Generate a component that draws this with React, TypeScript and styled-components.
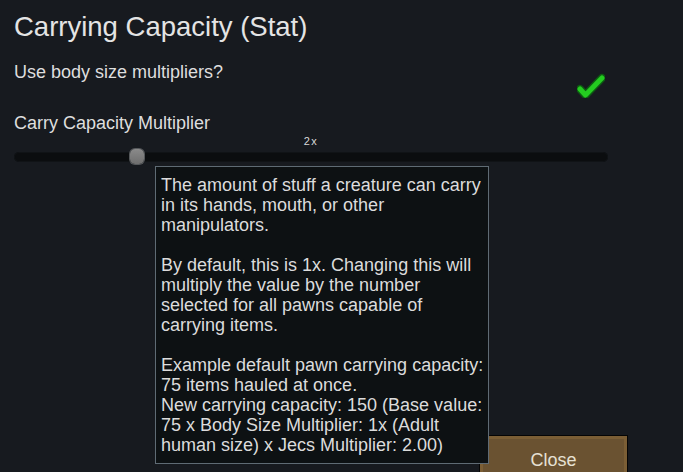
import styled, { createGlobalStyle } from "styled-components";

const GlobalStyle = createGlobalStyle`
  html, body {
    margin: 0;
    padding: 0;
    background: #171a1f;
    overflow: hidden;
  }
  body {
    font-family: "Liberation Sans", Arial, sans-serif;
    color: #dedede;
  }
`;

const Window = styled.div`
  position: relative;
  box-sizing: border-box;
  height: 485px;
  padding: 11px 55px 0 14px;
  display: flex;
  flex-direction: column;
  background: #171a1f;
`;

const Title = styled.h1`
  margin: 0;
  font-size: 27.5px;
  line-height: 32px;
  font-weight: normal;
  color: #e4e4e4;
`;

const Settings = styled.div`
  width: 594px;
  display: flex;
  flex-direction: column;
`;

const CheckRow = styled.div`
  margin-top: 19px;
  height: 36px;
  display: flex;
  justify-content: space-between;
  align-items: flex-start;
`;

const Label = styled.span`
  font-size: 18px;
  line-height: 20px;
  color: #dedede;
`;

const CheckMark = styled.svg`
  margin-top: 11px;
  margin-right: 3px;
  width: 28px;
  height: 25px;
`;

const SliderBlock = styled.div`
  margin-top: 15px;
  display: flex;
  flex-direction: column;
`;

const SliderValue = styled.div`
  margin-top: 2px;
  text-align: center;
  font-size: 11px;
  line-height: 12px;
  letter-spacing: 1.5px;
  color: #d8d8d8;
`;

const Track = styled.div`
  position: relative;
  margin-top: 5px;
  height: 10px;
  border-radius: 5px;
  background: #0b0d0f;
  box-shadow: inset 0 0 0 1px #101316;
`;

const Thumb = styled.div`
  position: absolute;
  top: -3px;
  width: 14px;
  height: 15px;
  border-radius: 5px;
  background: linear-gradient(#8a8a8a, #6e6e6e);
  box-shadow: 0 0 0 1px #55585b;
`;

const Footer = styled.div`
  margin-top: auto;
  display: flex;
  justify-content: flex-end;
`;

const CloseButton = styled.button`
  box-sizing: border-box;
  width: 149px;
  height: 50px;
  padding: 14px 0 0;
  display: flex;
  justify-content: center;
  align-items: flex-start;
  border: 1px solid #050505;
  outline: 3px solid #7b5e35;
  outline-offset: -4px;
  background: #6a5231;
  font-family: inherit;
  font-size: 18px;
  line-height: 20px;
  color: #e6e1d4;
`;

const Tooltip = styled.div`
  position: absolute;
  left: 155px;
  top: 166px;
  box-sizing: border-box;
  width: 334px;
  padding: 8px 5px 8px 5px;
  border: 1px solid #5f6b74;
  background: #0d1113;
  font-size: 18px;
  line-height: 20px;
  color: #dcdcdc;
  white-space: pre;
`;

const tooltipLines = [
  "The amount of stuff a creature can carry",
  "in its hands, mouth, or other",
  "manipulators.",
  "",
  "By default, this is 1x. Changing this will",
  "multiply the value by the number",
  "selected for all pawns capable of",
  "carrying items.",
  "",
  "Example default pawn carrying capacity:",
  "75 items hauled at once.",
  "New carrying capacity: 150 (Base value:",
  "75 x Body Size Multiplier: 1x (Adult",
  "human size) x Jecs Multiplier: 2.00)",
];

const SLIDER_MIN = 0;
const SLIDER_MAX = 10;
const TRACK_RANGE = 580;
const THUMB_WIDTH = 14;

function App() {
  const multiplier = 2;
  const thumbLeft =
    ((multiplier - SLIDER_MIN) / (SLIDER_MAX - SLIDER_MIN)) * TRACK_RANGE;

  return (
    <>
      <GlobalStyle />
      <Window>
        <Title>Carrying Capacity (Stat)</Title>
        <Settings>
          <CheckRow>
            <Label>Use body size multipliers?</Label>
            <CheckMark viewBox="0 0 28 25">
              <polyline
                points="3,16 8.5,22 25,5"
                fill="none"
                stroke="#0d5a12"
                strokeWidth="8"
                strokeLinecap="round"
                strokeLinejoin="round"
              />
              <polyline
                points="3,16 8.5,22 25,5"
                fill="none"
                stroke="#24cc20"
                strokeWidth="5"
                strokeLinecap="round"
                strokeLinejoin="round"
              />
            </CheckMark>
          </CheckRow>
          <SliderBlock>
            <Label>Carry Capacity Multiplier</Label>
            <SliderValue>{multiplier}x</SliderValue>
            <Track>
              <Thumb style={{ left: thumbLeft - THUMB_WIDTH / 2 + 7 }} />
            </Track>
          </SliderBlock>
        </Settings>
        <Footer>
          <CloseButton>Close</CloseButton>
        </Footer>
        <Tooltip>{tooltipLines.join("\n")}</Tooltip>
      </Window>
    </>
  );
}

export default App;
